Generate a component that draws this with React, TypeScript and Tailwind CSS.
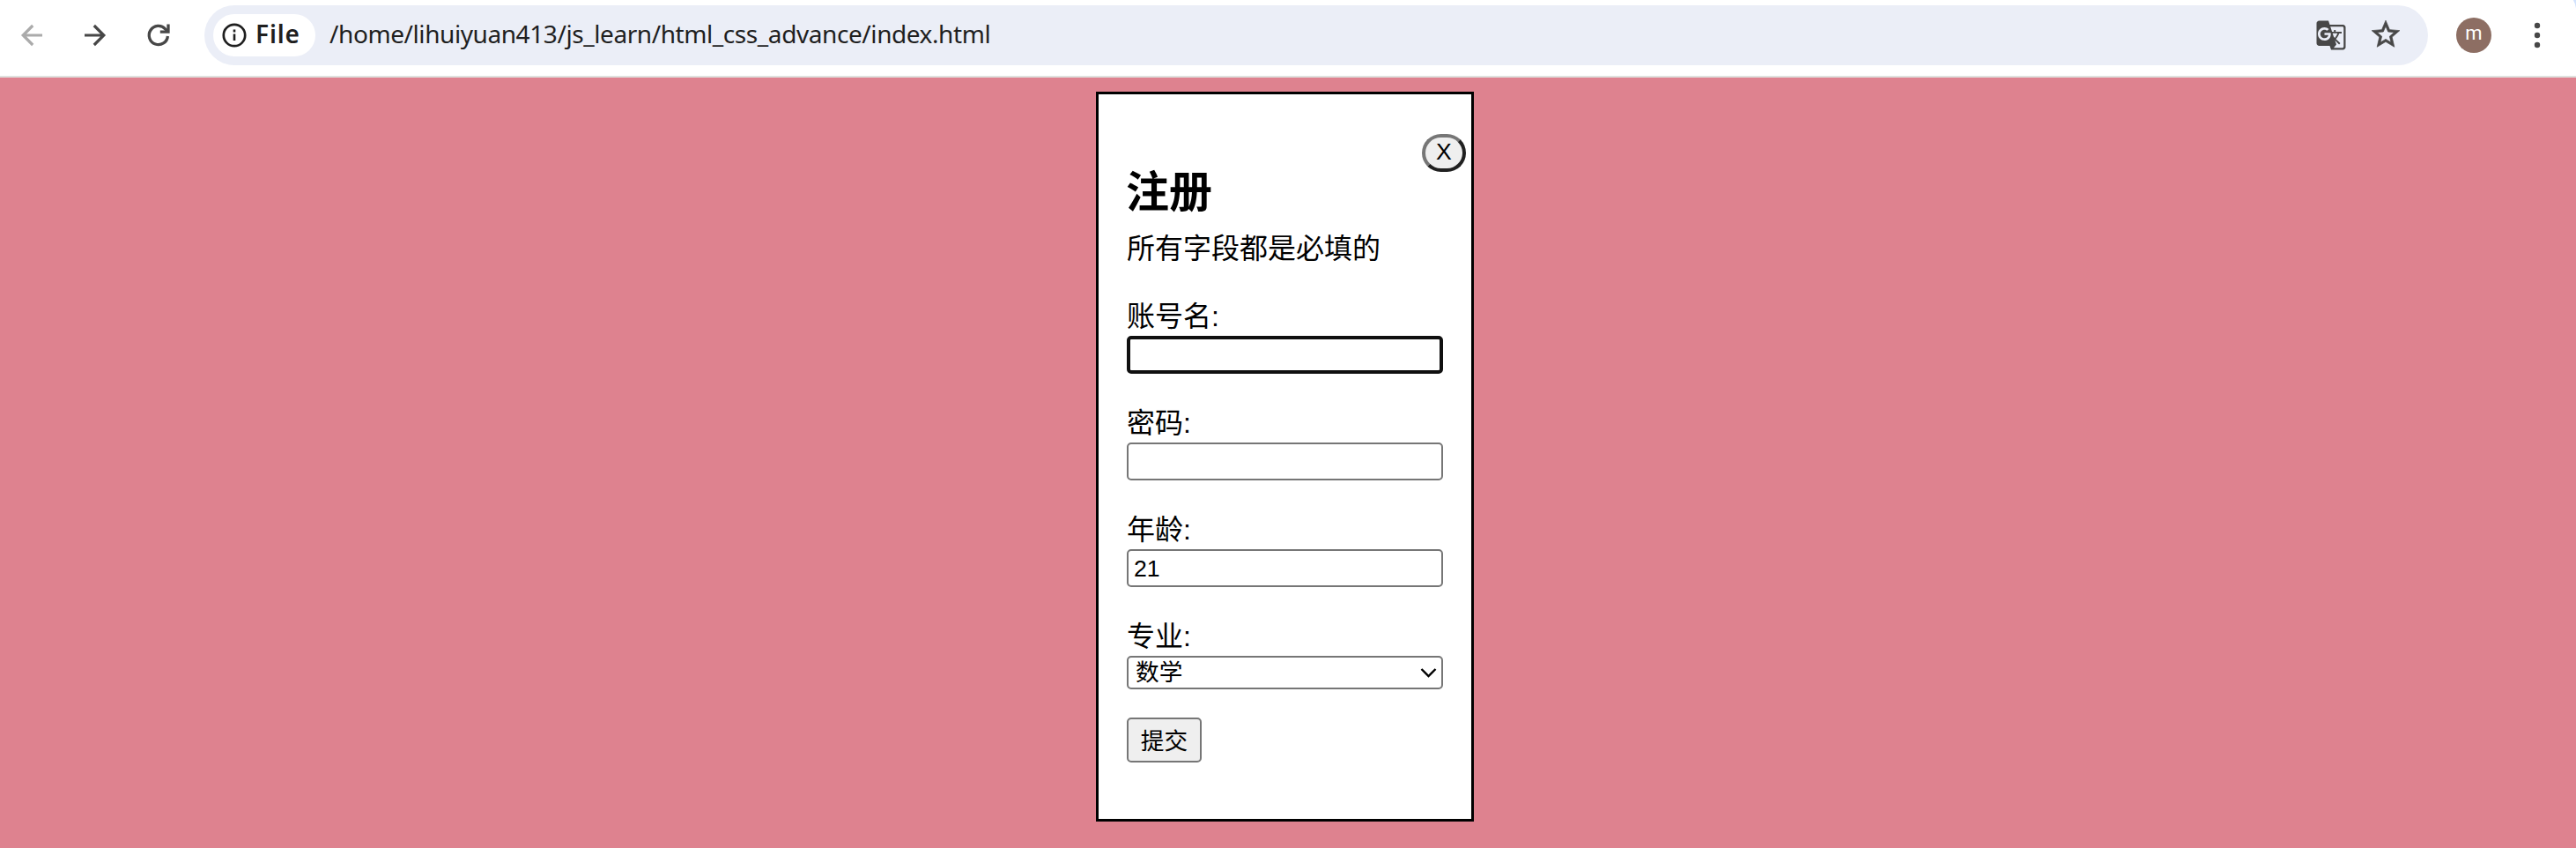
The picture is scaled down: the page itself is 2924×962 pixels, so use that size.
import type { ReactNode } from "react";

function Toolbar() {
  return (
    <header className="relative flex h-[88px] items-start border-b-2 border-[#dfe1de] bg-white pt-[6px] font-['Noto_Sans','Open_Sans',sans-serif]">
      <svg className="absolute right-0 top-0 h-[10px] w-1" viewBox="0 0 4 10" fill="#d3e3fd">
        <path d="M.8 0H4v9.500Q3.500 4 .8 0z" />
      </svg>
      <div className="flex h-[68px] w-[232px] shrink-0 items-center gap-[40px] pl-[20px]">
        <svg className="size-8" viewBox="0 0 32 32" fill="none" stroke="#ababab" strokeWidth="3.2">
          <path d="M28 16H6M17.2 5L6.2 16l11 11" />
        </svg>
        <svg className="size-8" viewBox="0 0 32 32" fill="none" stroke="#474747" strokeWidth="3.2">
          <path d="M4 16h22M14.800 5l11 11-11 11" />
        </svg>
        <svg className="size-8" viewBox="0 0 32 32" fill="none" stroke="#474747" strokeWidth="3.3">
          <path d="M26.400 17A10.600 10.600 0 1 1 23.600 8.800l3.200 3.200" />
          <path d="M27 3.500v8.700h-9.200" />
        </svg>
      </div>
      <div className="flex h-[68px] w-[2524px] shrink-0 items-center rounded-full bg-[#ebeef7] pl-[10px] pr-[29px]">
        <div className="flex h-12 w-[116px] shrink-0 items-center rounded-full bg-white pl-[10px]">
          <svg className="h-7 w-7" viewBox="0 0 28 28" fill="none" stroke="#1f1f1f">
            <circle cx="14" cy="14" r="12.2" strokeWidth="2.700" />
            <path d="M14 12.500v7.500M14 7.500v3" strokeWidth="2.600" />
          </svg>
          <span className="-mt-1 ml-[10px] text-[28px] font-semibold leading-[48px] tracking-[0.9px] text-[#1f1f1f]">File</span>
        </div>
        <span className="-mt-1 ml-4 text-[28px] leading-[68px] tracking-[-0.42px] text-[#1f1f1f]">
          /home/lihuiyuan413/js_learn/html_css_advance/index.html
        </span>
        <div className="ml-auto flex items-center gap-[25px]">
          <svg className="size-9" viewBox="0 0 24 24" fill="#474747">
            <path d="M21 4H11l-1-3H3c-1.100 0-2 .9-2 2v15c0 1.100.9 2 2 2h8l1 3h9c1.100 0 2-.9 2-2V6c0-1.100-.9-2-2-2zM7 16c-2.760 0-5-2.240-5-5s2.240-5 5-5c1.350 0 2.480.5 3.350 1.300L9.030 8.570c-.38-.36-1.040-.78-2.030-.78-1.740 0-3.150 1.440-3.150 3.210S5.260 14.210 7 14.210c2.010 0 2.840-1.440 2.920-2.410H7v-1.710h4.680c.07.31.12.61.12 1.020C11.800 13.970 9.890 16 7 16zm6.170-5.420h3.700c-.43 1.250-1.110 2.430-2.050 3.470-.31-.35-.6-.72-.86-1.100l-.79-2.370zm8.330 9.920c0 .55-.45 1-1 1H14l2-2.500-1.040-3.100 3.100 3.100.92-.92-3.300-3.250.02-.02c1.130-1.250 1.930-2.690 2.400-4.220H20v-1.300h-4.530V8h-1.290v1.290h-1.440L11.460 5.500h9.040c.55 0 1 .45 1 1v14z" />
          </svg>
          <svg className="-mt-[2px] size-[38px]" viewBox="0 0 24 24" fill="#474747" stroke="#474747" strokeWidth=".45">
            <path d="M22 9.240l-7.190-.62L12 2 9.190 8.630 2 9.240l5.460 4.730L5.820 21 12 17.270 18.180 21l-1.630-7.030L22 9.240zM12 15.400l-3.760 2.270 1-4.280-3.320-2.880 4.380-.38L12 6.100l1.710 4.040 4.380.38-3.320 2.880 1 4.280L12 15.400z" />
          </svg>
        </div>
      </div>
      <div className="ml-8 mt-[14px] flex size-10 shrink-0 items-center justify-center rounded-full bg-[#8d6e63] pb-[5px] font-[Roboto,sans-serif] text-[22px] text-white">
        m
      </div>
      <svg className="ml-[44px] mt-[18px] h-8 w-4" viewBox="0 0 16 32" fill="#474747">
        <circle cx="8" cy="5" r="3.200" />
        <circle cx="8" cy="16" r="3.200" />
        <circle cx="8" cy="27" r="3.200" />
      </svg>
    </header>
  );
}

function Field({ label, children }: { label: string; children: ReactNode }) {
  return (
    <label className="flex h-[121px] flex-col">
      <span className="h-[46px] text-[32px] leading-[49px]">{label}</span>
      {children}
    </label>
  );
}

const control =
  "h-[43px] w-full rounded-[5px] border-2 border-[#767676] bg-white px-[6px] pt-px text-[26.667px] outline-none";

export default function App() {
  return (
    <div className="flex h-[962px] w-[2924px] flex-col overflow-hidden bg-[#de828f]">
      <Toolbar />
      <main className="flex justify-center pr-[7px] pt-4 text-black">
        <form
          lang="zh-CN"
          className="relative h-[828px] w-[429px] border-[3px] border-black bg-white px-8 font-['Liberation_Sans','Noto_Sans_CJK_SC',sans-serif]"
        >
          <button
            type="button"
            className="absolute right-[6px] top-[45px] h-[43px] w-[50px] rounded-[22px] border-4 border-b-[#212121] border-l-[#767676] border-r-[#212121] border-t-[#767676] bg-[#efefef] pb-[2px] text-[26.667px] leading-[33px]"
          >
            X
          </button>
          <h1 className="-ml-px mt-[75px] h-[70px] text-[49px] font-bold leading-[73px]">注册</h1>
          <p className="mt-[6px] h-[46px] text-[32px] leading-[48px]">所有字段都是必填的</p>
          <div className="mt-[31px]">
            <Field label="账号名:">
              <input className="h-[43px] w-full rounded-[5px] border-4 border-[#101010] bg-white outline-none" />
            </Field>
            <Field label="密码:">
              <input type="password" className={control} />
            </Field>
            <Field label="年龄:">
              <input className={control} defaultValue="21" />
            </Field>
            <Field label="专业:">
              <span className="flex h-[38px] w-full items-center justify-between rounded-[5px] border-2 border-[#767676] pl-2 pr-[5px] text-[26.667px] leading-[34px]">
                数学
                <svg className="h-5 w-5" viewBox="0 0 20 20" fill="none" stroke="black" strokeWidth="2.400">
                  <path d="M2.500 6l8 8 8-8" />
                </svg>
              </span>
            </Field>
          </div>
          <button
            type="button"
            className="-mt-[5px] h-[51px] w-[85px] rounded-[5px] border-2 border-[#767676] bg-[#efefef] pt-1 text-[26.667px] leading-[43px]"
          >
            提交
          </button>
        </form>
      </main>
    </div>
  );
}
